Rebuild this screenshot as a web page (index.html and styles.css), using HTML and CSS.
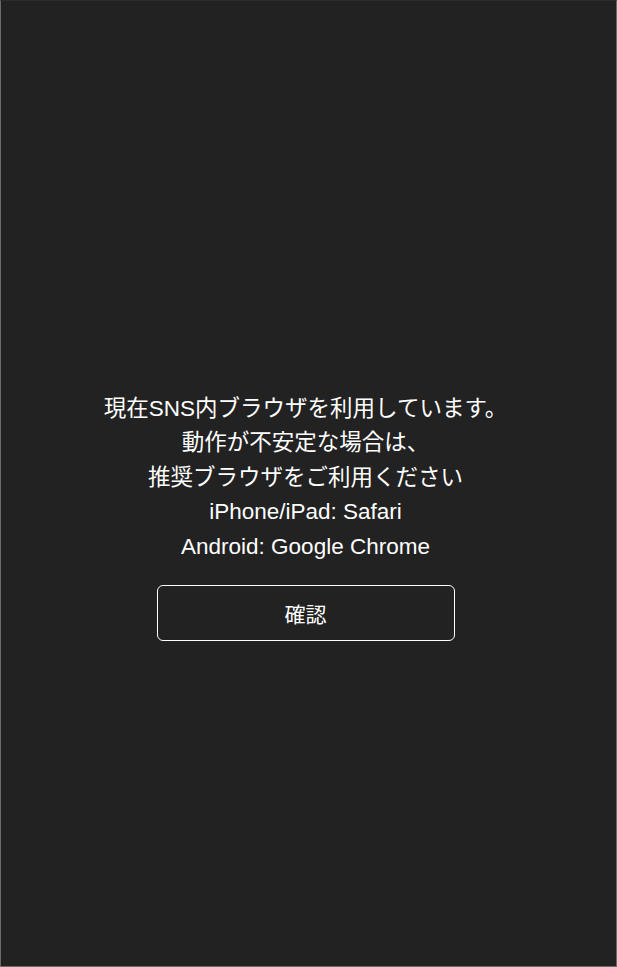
FILE: index.html
```html
<!DOCTYPE html>
<html lang="ja">
<head>
<meta charset="utf-8">
<link rel="stylesheet" href="styles.css">
</head>
<body>
<div class="screen">
  <div class="notice">
    <p class="message">現在SNS内ブラウザを利用しています。<br>動作が不安定な場合は、<br>推奨ブラウザをご利用ください<br>iPhone/iPad: Safari<br>Android: Google Chrome</p>
    <button class="confirm" type="button">確認</button>
  </div>
</div>
</body>
</html>
```

FILE: styles.css
```css
html, body {
  margin: 0;
  padding: 0;
  height: 100%;
  background: #222222;
}
.screen {
  box-sizing: border-box;
  height: 967px;
  border: 1px solid #6a6a6a;
  border-top-color: #2a2a2a;
  background: #222222;
  display: flex;
  align-items: center;
  justify-content: center;
  padding-top: 66px;
  padding-right: 6px;
  font-family: "Liberation Sans", "Noto Sans CJK JP", sans-serif;
  color: #ffffff;
}
.notice {
  display: flex;
  flex-direction: column;
  align-items: center;
}
.message {
  margin: 0;
  font-size: 22.5px;
  line-height: 34.4px;
  text-align: center;
}
.confirm {
  margin-top: 21px;
  width: 298px;
  height: 56px;
  background: transparent;
  border: 1.5px solid #ffffff;
  border-radius: 6px;
  color: #ffffff;
  font-family: "Liberation Sans", "Noto Sans CJK JP", sans-serif;
  font-size: 21px;
  padding: 0;
}
```
